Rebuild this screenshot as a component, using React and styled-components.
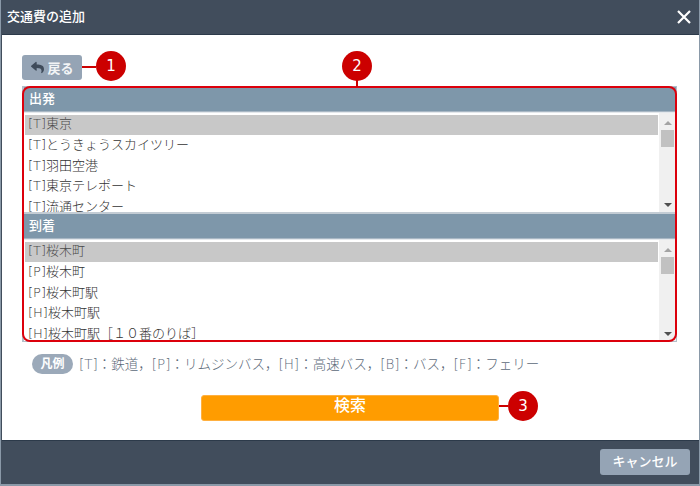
import React from "react";
import styled, { createGlobalStyle } from "styled-components";
import { FaReply } from "react-icons/fa";

const Global = createGlobalStyle`
  html, body { margin: 0; padding: 0; width: 700px; height: 486px; overflow: hidden; background: #8a99a8; }
  * { box-sizing: border-box; }
  body { font-family: "DejaVu Sans", "Noto Sans CJK JP", sans-serif; }
`;
const Modal = styled.div`
  width: 698px; height: 484px; margin: 0 0 0 1px; padding: 0 0 0 1px;
  display: flex; flex-direction: column; background: #414d5c;
`;
const Header = styled.header`
  height: 35px; flex: none; display: flex; align-items: center; justify-content: space-between;
  padding: 0 8px 1px 5px; background: #414d5c; border-bottom: 1px solid #2c3a4a;
`;
const Title = styled.h1`
  margin: 0; font-size: 13px; font-weight: 500; color: #fff; line-height: 16px;
`;
const Close = styled.svg`width: 14px; height: 14px; display: block;`;
const Body = styled.main`
  position: relative; flex: 1; background: #fff; padding: 20px 20px 0 20px;
  display: flex; flex-direction: column;
`;
const BackButton = styled.button`
  width: 60px; height: 25px; border: 0; border-radius: 3px; background: #95a4b5; color: #f2f4f6;
  font: 700 13px "DejaVu Sans", "Noto Sans CJK JP", sans-serif; display: flex; align-items: center;
  justify-content: center; gap: 3px; padding: 0 0 0 1px;
`;
const Panel = styled.section`
  position: relative; margin-top: 6px; width: 655px; height: 256px;
  background: linear-gradient(#b4bfc9 8px, #fff 8px, #fff 248px, #b4bfc9 248px);
  display: flex; flex-direction: column; padding: 1px 1px 1px 2px;
`;
const Outline = styled.div`
  position: absolute; inset: 0; border: 2px solid #dc000c; border-radius: 8px; pointer-events: none;
`;
const PanelHeader = styled.div`
  height: ${p => p.$second ? 27 : 25}px; flex: none; background: #7e97aa; color: #fff; font-size: 13px; font-weight: 500;
  line-height: 24px; padding-left: 5px; border-bottom: 1px solid #a8b7c4;
  ${p => p.$second ? "border-top: 2px solid #c3ccd4;" : ""}
`;
const List = styled.div`
  height: ${p => p.$h}px; flex: none; background: #fff; display: flex; overflow: hidden;
  border-top: 1px solid #e4e8ec; padding: 2px 0 0 1px;
`;
const Rows = styled.div`flex: 1; overflow: hidden;`;
const Row = styled.div`
  height: 20.8px; line-height: 17px; font-size: 13px; font-weight: 300;
  color: ${p => p.$sel ? "#4a4a4a" : "#333"}; padding-left: 3px;
  background: linear-gradient(${p => p.$sel ? "#c8c8c8" : "transparent"} 20px, transparent 20px);
  white-space: nowrap;
`;
const Track = styled.div`
  width: 17px; flex: none; margin-top: -2px; margin-left: 1px; background: #f0f0f0; display: flex; flex-direction: column; align-items: center;
  justify-content: space-between; padding: 8px 0 5px; position: relative;
`;
const Thumb = styled.div`
  position: absolute; top: 17px; left: 2px; width: 13px; height: 17px; background: #c1c1c1;
`;
const Arrow = styled.div`
  width: 0; height: 0; border-left: 4px solid transparent; border-right: 4px solid transparent;
  ${p => p.$up ? "border-bottom: 4px solid #a3a3a3;" : "border-top: 4px solid #505050;"}
`;
const Legend = styled.div`
  display: flex; align-items: center; gap: 6px; margin: 12px 0 0 10px; font-size: 13.5px; font-weight: 300; color: #5c6a79; line-height: 20px; white-space: nowrap;
`;
const LegendTag = styled.span`
  background: #9ba9b9; color: #fff; font-weight: 700; font-size: 12px; border-radius: 10px;
  height: 20px; width: 41px; display: flex; align-items: center; justify-content: center; flex: none;
`;
const SearchRow = styled.div`display: flex; justify-content: center; margin-top: 21px; padding-right: 1px;`;
const Search = styled.button`
  width: 298px; height: 26px; border: 1px solid #ffb040; border-radius: 3px; background: #ff9c00; color: #fff;
  font: 500 16px/20px "DejaVu Sans", "Noto Sans CJK JP", sans-serif; padding: 0 0 4px;
`;
const Footer = styled.footer`
  height: 44px; flex: none; background: #414d5c; border-top: 1px solid #2c3a4a; display: flex; align-items: center;
  justify-content: flex-end; padding: 0 9px 1px 0;
`;
const Cancel = styled.button`
  width: 90px; height: 26px; border: 0; border-radius: 3px; background: #95a4b5; color: #fff;
  font: 500 13px/18px "DejaVu Sans", "Noto Sans CJK JP", sans-serif; padding: 0;
`;
const Badge = styled.div`
  position: absolute; left: ${p => p.$x}px; top: ${p => p.$y}px; width: 30px; height: 30px; border-radius: 50%;
  background: #cc0000; color: #fff; font-size: 15px; font-weight: 500; display: flex; align-items: center; justify-content: center;
`;
const Leader = styled.div`
  position: absolute; left: ${p => p.$x}px; top: ${p => p.$y}px; width: ${p => p.$w}px; height: ${p => p.$h}px; background: #cc0000;
`;

const depart = ["[T]東京", "[T]とうきょうスカイツリー", "[T]羽田空港", "[T]東京テレポート", "[T]流通センター"];
const arrive = ["[T]桜木町", "[P]桜木町", "[P]桜木町駅", "[H]桜木町駅", "[H]桜木町駅［１０番のりば］"];

function StationList({ items, h }) {
  return (
    <List $h={h}>
      <Rows>{items.map((t, i) => <Row key={t} $sel={i === 0}>{t}</Row>)}</Rows>
      <Track><Arrow $up /><Thumb /><Arrow /></Track>
    </List>
  );
}

export default function App() {
  return (
    <Modal>
      <Global />
      <Header>
        <Title>交通費の追加</Title>
        <Close viewBox="0 0 14 14"><path d="M1 1L13 13M13 1L1 13" stroke="#fff" strokeWidth="2.2" /></Close>
      </Header>
      <Body>
        <BackButton>
          <FaReply size={13} color="#3f4b5a" />
          戻る
        </BackButton>
        <Panel>
          <PanelHeader>出発</PanelHeader>
          <StationList items={depart} h={100} />
          <PanelHeader $second>到着</PanelHeader>
          <StationList items={arrive} h={102} />
          <Outline />
        </Panel>
        <Legend>
          <LegendTag>凡例</LegendTag>
          [T]：鉄道，[P]：リムジンバス，[H]：高速バス，[B]：バス，[F]：フェリー
        </Legend>
        <SearchRow><Search>検索</Search></SearchRow>
        <Leader $x={80} $y={31} $w={14} $h={2} />
        <Badge $x={94} $y={16}>1</Badge>
        <Leader $x={354} $y={45} $w={2} $h={7} />
        <Badge $x={340} $y={16}>2</Badge>
        <Leader $x={497} $y={370} $w={9} $h={2} />
        <Badge $x={506} $y={356}>3</Badge>
      </Body>
      <Footer><Cancel>キャンセル</Cancel></Footer>
    </Modal>
  );
}
